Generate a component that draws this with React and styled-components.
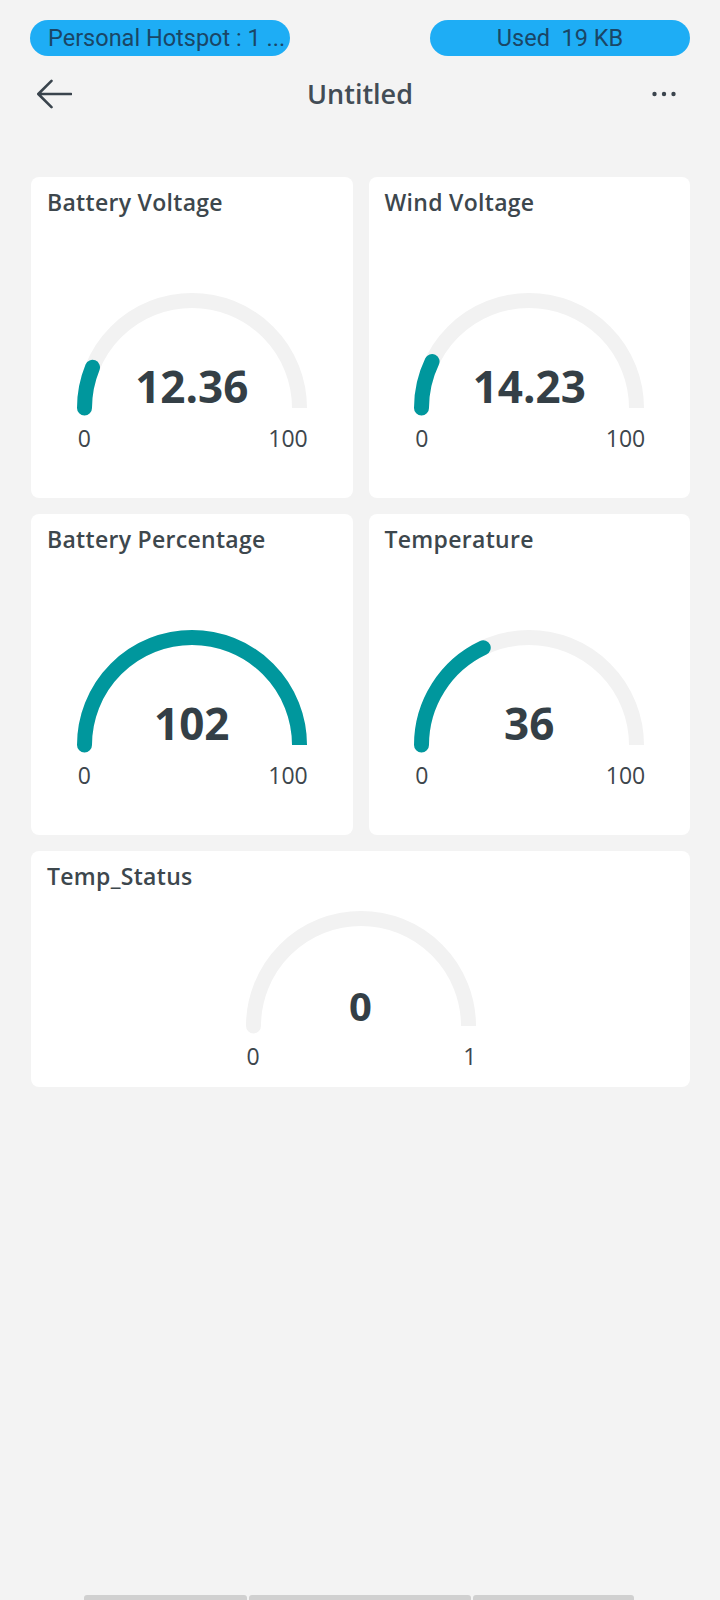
import React from "react";
import styled, { createGlobalStyle } from "styled-components";

const GlobalStyle = createGlobalStyle`
  html, body { margin: 0; padding: 0; background: #f3f3f3; }
  body { font-family: "Open Sans", "Noto Sans", sans-serif; }
  * { box-sizing: border-box; }
`;

const Page = styled.div`
  min-height: 1600px;
  background: #f3f3f3;
  display: flex;
  flex-direction: column;
`;

const StatusRow = styled.div`
  display: flex;
  justify-content: space-between;
  padding: 20px 30px 0 30px;
`;

const Pill = styled.div`
  width: 260px;
  height: 36px;
  border-radius: 18px;
  background: #1eadf5;
  color: #1a4666;
  font-family: Roboto, "Noto Sans", sans-serif;
  font-size: 23.5px;
  line-height: 36px;
  padding: ${(p) => (p.$align === "left" ? "0 0 0 18px" : "0")};
  text-align: ${(p) => p.$align};
  white-space: nowrap;
  overflow: hidden;
`;

const Header = styled.header`
  height: 76px;
  display: grid;
  grid-template-columns: 1fr auto 1fr;
  align-items: center;
  padding: 0 36px;
`;

const BackButton = styled.button`
  justify-self: start;
  border: 0;
  background: none;
  padding: 0;
  display: flex;
  color: #3a444d;
`;

const Title = styled.h1`
  margin: 0;
  font-family: "Open Sans", sans-serif;
  font-size: 27px;
  font-weight: 600;
  color: #424c55;
  line-height: 36px;
`;

const MoreButton = styled.button`
  justify-self: end;
  margin-right: 8px;
  border: 0;
  background: none;
  padding: 0;
  display: flex;
  color: #3a444d;
`;

const Grid = styled.main`
  margin-top: 45px;
  padding: 0 30px 0 31px;
  display: grid;
  grid-template-columns: 1fr 1fr;
  gap: 16px;
`;

const Card = styled.section`
  background: #ffffff;
  border-radius: 8px;
  padding: 10px 16px ${(p) => (p.$wide ? "16px" : "45px")};
  grid-column: ${(p) => (p.$wide ? "1 / -1" : "auto")};
  display: flex;
  flex-direction: column;
  align-items: center;
`;

const CardTitle = styled.h2`
  align-self: stretch;
  margin: 0;
  font-family: "Open Sans", sans-serif;
  font-size: 23px;
  font-weight: 600;
  letter-spacing: 0.3px;
  line-height: 30px;
  color: #3d474d;
`;

const GaugeWrap = styled.div`
  position: relative;
  width: 230px;
  margin-top: ${(p) => (p.$wide ? "19.5px" : "76px")};
`;

const GaugeSvg = styled.svg`
  display: block;
`;

const Value = styled.div`
  position: absolute;
  left: 0;
  right: 0;
  bottom: 8px;
  text-align: center;
  font-family: "Open Sans", sans-serif;
  font-weight: 700;
  font-size: ${(p) => p.$size}px;
  line-height: 1;
  color: #343f46;
`;

const Labels = styled.div`
  display: flex;
  justify-content: space-between;
  margin-top: 7px;
  margin-right: -2px;
  font-family: "Open Sans", sans-serif;
  font-size: 23px;
  line-height: 30px;
  color: #3d464c;
`;

const NavBar = styled.div`
  margin-top: auto;
  display: flex;
  padding-left: 84px;
  gap: 2px;
`;

const NavSeg = styled.div`
  width: ${(p) => p.$w}px;
  height: 5px;
  background: #d0d0d0;
  border-radius: 3px 3px 0 0;
`;

const W = 230;
const H = 123;
const CX = 115;
const CY = 115;
const R = 107.5;
const SW = 15;

function arc(pct) {
  const a = Math.PI * Math.min(Math.max(pct, 0), 1);
  const x = CX - R * Math.cos(a);
  const y = CY - R * Math.sin(a);
  return `M ${CX - R} ${CY} A ${R} ${R} 0 0 1 ${x.toFixed(2)} ${y.toFixed(2)}`;
}

function Gauge({ id, value, min, max, wide, size }) {
  const pct = (value - min) / (max - min);
  const clip = `clip-${id}`;
  return (
    <>
      <GaugeWrap $wide={wide}>
        <GaugeSvg width={W} height={H} viewBox={`0 0 ${W} ${H}`}>
          <defs>
            <clipPath id={clip}>
              <path d={`M0 0 H${W} V${CY} H${CX} V${H} H0 Z`} />
            </clipPath>
          </defs>
          <g clipPath={`url(#${clip})`}>
            <path d={arc(1)} fill="none" stroke="#f2f2f2" strokeWidth={SW} strokeLinecap="round" />
            {pct > 0 && (
              <path d={arc(pct)} fill="none" stroke="#00979d" strokeWidth={SW} strokeLinecap="round" />
            )}
          </g>
        </GaugeSvg>
        <Value $size={size}>{value}</Value>
      </GaugeWrap>
      <Labels style={{ width: W }}>
        <span>{min}</span>
        <span>{max}</span>
      </Labels>
    </>
  );
}

const widgets = [
  { name: "Battery Voltage", value: "12.36", min: 0, max: 100 },
  { name: "Wind Voltage", value: "14.23", min: 0, max: 100 },
  { name: "Battery Percentage", value: "102", min: 0, max: 100 },
  { name: "Temperature", value: "36", min: 0, max: 100 },
  { name: "Temp_Status", value: "0", min: 0, max: 1, wide: true },
];

export default function App() {
  return (
    <Page>
      <GlobalStyle />
      <StatusRow>
        <Pill $align="left">Personal Hotspot : 1 ...</Pill>
        <Pill $align="center">Used&nbsp; 19 KB</Pill>
      </StatusRow>
      <Header>
        <BackButton aria-label="Back">
          <svg width="36" height="30" viewBox="0 0 36 30" fill="none">
            <path d="M35 15 H2.5 M15.5 1.8 L2.3 15 L15.5 28.2" stroke="currentColor" strokeWidth="2.6" strokeLinecap="round" strokeLinejoin="round" />
          </svg>
        </BackButton>
        <Title>Untitled</Title>
        <MoreButton aria-label="More">
          <svg width="24" height="6" viewBox="0 0 24 6">
            <circle cx="2.5" cy="3" r="2.2" fill="currentColor" />
            <circle cx="12" cy="3" r="2.2" fill="currentColor" />
            <circle cx="21.5" cy="3" r="2.2" fill="currentColor" />
          </svg>
        </MoreButton>
      </Header>
      <Grid>
        {widgets.map((w, i) => (
          <Card key={w.name} $wide={w.wide}>
            <CardTitle>{w.name}</CardTitle>
            <Gauge
              id={i}
              value={w.value}
              min={w.min}
              max={w.max}
              wide={w.wide}
              size={w.wide ? 40 : 44}
            />
          </Card>
        ))}
      </Grid>
      <NavBar>
        <NavSeg $w={163} />
        <NavSeg $w={222} />
        <NavSeg $w={161} />
      </NavBar>
    </Page>
  );
}
